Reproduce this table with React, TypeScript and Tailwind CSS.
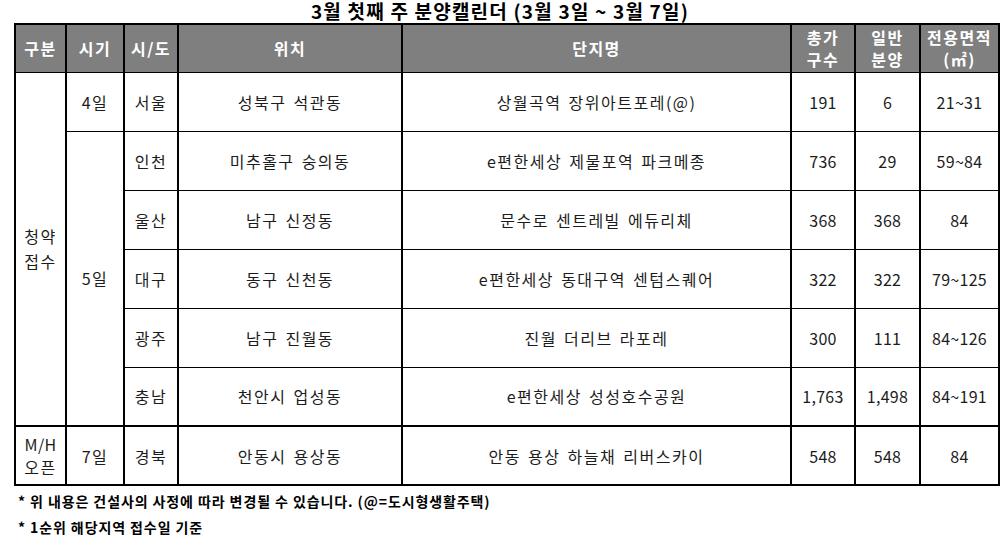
import React from 'react'

const font = { fontFamily: '"Noto Sans CJK KR", "Noto Sans", sans-serif' }

type Row = { region: string; loc: string; name: string; total: string; general: string; area: string }

const rows5: Row[] = [
  { region: '인천', loc: '미추홀구 숭의동', name: 'e편한세상 제물포역 파크메종', total: '736', general: '29', area: '59~84' },
  { region: '울산', loc: '남구 신정동', name: '문수로 센트레빌 에듀리체', total: '368', general: '368', area: '84' },
  { region: '대구', loc: '동구 신천동', name: 'e편한세상 동대구역 센텀스퀘어', total: '322', general: '322', area: '79~125' },
  { region: '광주', loc: '남구 진월동', name: '진월 더리브 라포레', total: '300', general: '111', area: '84~126' },
  { region: '충남', loc: '천안시 업성동', name: 'e편한세상 성성호수공원', total: '1,763', general: '1,498', area: '84~191' },
]

const td = 'border-x-2 border-y border-black text-center align-middle p-0 tracking-[1.5px] [word-spacing:2px]'
const num = 'border-x-2 border-y border-black text-center align-middle p-0 tracking-[0.3px]'
const th = 'border-x-2 border-y border-black text-center align-middle p-0 font-bold text-white tracking-[1.5px]'

function DataCells({ r }: { r: Row }) {
  return (
    <>
      <td className={td}>{r.region}</td>
      <td className={td}>{r.loc}</td>
      <td className={td}>{r.name}</td>
      <td className={num}>{r.total}</td>
      <td className={num}>{r.general}</td>
      <td className={num}>{r.area}</td>
    </>
  )
}

export default function App() {
  return (
    <div className="w-[1000px] h-[540px] bg-white text-[#1c1c1c] overflow-hidden" style={font}>
      <div className="h-[23px] text-center text-[19px] font-bold leading-[22px] text-black tracking-[1.2px]">
        3월 첫째 주 분양캘린더 (3월 3일 ~ 3월 7일)
      </div>

      <div className="pl-[14px]">
        <table className="w-[984px] table-fixed border-collapse border-2 border-black text-[16px]">
          <colgroup>
            <col className="w-[51px]" />
            <col className="w-[58px]" />
            <col className="w-[54px]" />
            <col className="w-[224px]" />
            <col className="w-[389px]" />
            <col className="w-[64px]" />
            <col className="w-[65px]" />
            <col className="w-[79px]" />
          </colgroup>
          <thead>
            <tr className="h-[48px] bg-[#7f7f7f] leading-[22px]">
              <th className={th}>구분</th>
              <th className={th}>시기</th>
              <th className={th}>시/도</th>
              <th className={th}>위치</th>
              <th className={th}>단지명</th>
              <th className={th}>총가<br />구수</th>
              <th className={th}>일반<br />분양</th>
              <th className={th}>전용면적<br />(㎡)</th>
            </tr>
          </thead>
          <tbody>
            <tr className="h-[59px]">
              <td rowSpan={6} className={td + ' leading-[25px]'}>청약<br />접수</td>
              <td className={td}>4일</td>
              <DataCells r={{ region: '서울', loc: '성북구 석관동', name: '상월곡역 장위아트포레(@)', total: '191', general: '6', area: '21~31' }} />
            </tr>
            {rows5.map((r, i) => (
              <tr key={r.region} className="h-[59px]">
                {i === 0 && <td rowSpan={5} className={td}>5일</td>}
                <DataCells r={r} />
              </tr>
            ))}
            <tr className="h-[59px] border-t-2 border-black">
              <td className={num + ' border-t-2 leading-[23px]'}>M/H<br /><span className="tracking-[1.5px]">오픈</span></td>
              <td className={td + ' border-t-2'}>7일</td>
              <DataCells r={{ region: '경북', loc: '안동시 용상동', name: '안동 용상 하늘채 리버스카이', total: '548', general: '548', area: '84' }} />
            </tr>
          </tbody>
        </table>
      </div>

      <div className="pl-[18px] pt-[6px] text-[14px] font-bold text-black leading-[18px] tracking-[0.9px]">
        <p>* 위 내용은 건설사의 사정에 따라 변경될 수 있습니다. (@=도시형생활주택)</p>
        <p className="mt-[8px]">* 1순위 해당지역 접수일 기준</p>
      </div>
    </div>
  )
}
